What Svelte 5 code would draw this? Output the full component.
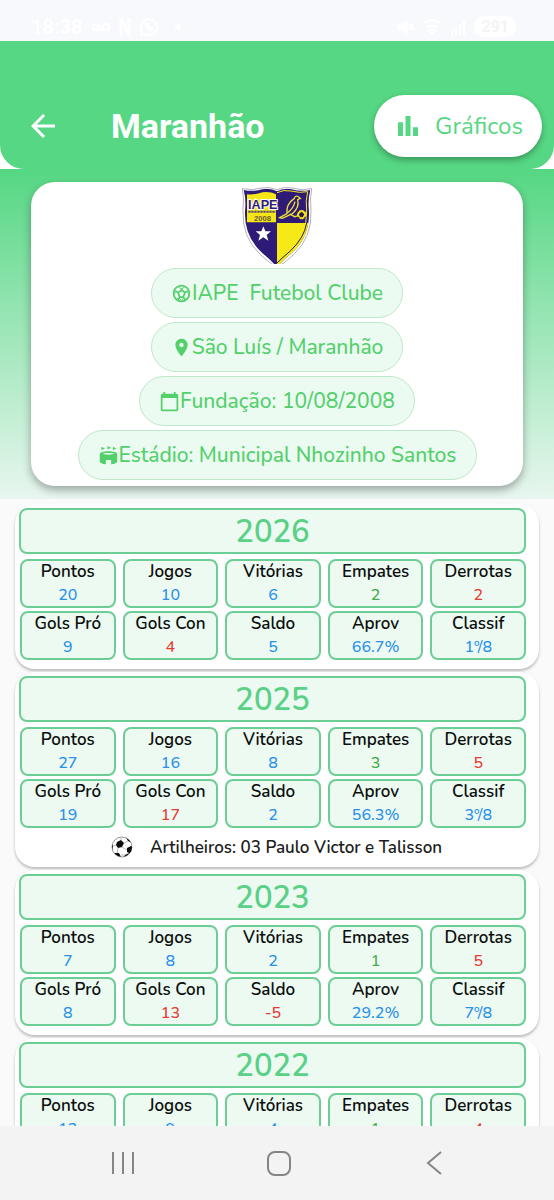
<script lang="ts">
  type Season = {
    year: number;
    values: string[];
    scorers?: string;
  };

  const labels = [
    'Pontos', 'Jogos', 'Vitórias', 'Empates', 'Derrotas',
    'Gols Pró', 'Gols Con', 'Saldo', 'Aprov', 'Classif'
  ];

  const seasons: Season[] = [
    { year: 2026, values: ['20', '10', '6', '2', '2', '9', '4', '5', '66.7%', '1º/8'] },
    {
      year: 2025,
      values: ['27', '16', '8', '3', '5', '19', '17', '2', '56.3%', '3º/8'],
      scorers: '03 Paulo Victor e Talisson'
    },
    { year: 2023, values: ['7', '8', '2', '1', '5', '8', '13', '-5', '29.2%', '7º/8'] },
    { year: 2022, values: ['13', '9', '4', '1', '4'] }
  ];

  const details = [
    { icon: 'ball', text: 'IAPE  Futebol Clube' },
    { icon: 'pin', text: 'São Luís / Maranhão' },
    { icon: 'calendar', text: 'Fundação: 10/08/2008' },
    { icon: 'stadium', text: 'Estádio: Municipal Nhozinho Santos' }
  ];

  function tone(label: string, value: string) {
    if (label === 'Empates') return 'green';
    if (label === 'Derrotas' || label === 'Gols Con' || value.startsWith('-')) return 'red';
    return 'blue';
  }
</script>

<div class="screen">
  <div class="status-bar">
    <div class="status-group">
      <span class="clock">18:38</span>
      <svg width="20" height="20" viewBox="0 0 20 20" fill="none" stroke="currentColor" stroke-width="2">
        <circle cx="5" cy="10" r="3" />
        <circle cx="15" cy="10" r="3" />
        <path d="M5 13h10" />
      </svg>
      <svg width="12" height="20" viewBox="0 0 12 20" fill="none" stroke="currentColor" stroke-width="3">
        <path d="M2 19V1l8 18V1" />
      </svg>
      <svg width="20" height="20" viewBox="0 0 20 20" fill="none" stroke="currentColor" stroke-width="2">
        <path d="M2 18l1-4a8 8 0 1 1 3 3z" />
        <path d="M7 6c-1 4 3 8 7 7l-1-2-2 0-2-2 0-2z" />
      </svg>
      <span class="dot"></span>
    </div>
    <div class="status-group">
      <svg width="18" height="18" viewBox="0 0 18 18" fill="currentColor" stroke="currentColor">
        <path d="M2 6h4l5-4v14l-5-4H2z" />
        <path d="M13 6l4 6m0-6l-4 6" stroke-width="2" />
      </svg>
      <svg width="20" height="18" viewBox="0 0 20 18" fill="none" stroke="currentColor" stroke-width="2">
        <path d="M1 6c5-5 13-5 18 0M4 10c4-3 8-3 12 0M7 13c2-2 4-2 6 0l-3 3z" />
      </svg>
      <svg width="16" height="18" viewBox="0 0 16 18" fill="currentColor">
        <path d="M1 13h2v4H1zM5 10h2v7H5zM9 6h2v11H9zM13 2h2v15h-2z" />
      </svg>
      <span class="battery">291</span>
    </div>
  </div>

  <header class="app-bar">
    <button class="back" aria-label="Voltar">
      <svg width="36" height="36" viewBox="0 0 24 24" fill="currentColor">
        <path d="M20 11H7.8l5.600-5.600L12 4l-8 8 8 8 1.400-1.400L7.800 13H20z" />
      </svg>
    </button>
    <h1>Maranhão</h1>
    <button class="charts">
      <svg width="30" height="30" viewBox="0 0 24 24" fill="currentColor">
        <path d="M4 9h4v11H4zM10 4h4v16h-4zM16 13h4v7h-4z" />
      </svg>
      Gráficos
    </button>
  </header>

  <section class="hero">
    <div class="club-card">
      <svg class="shield" width="72" height="77" viewBox="0 0 216 231" role="img" aria-label="IAPE">
        <path
          d="M4 5Q34 12 62 3Q86 -2 108 8Q130 -2 154 3Q182 12 212 5Q206 34 210 70Q214 150 158 203Q134 224 120 234H96Q82 224 58 203Q2 150 6 70Q10 34 4 5Z"
          fill="#fff" stroke="#8d8998" stroke-width="2"
        />
        <clipPath id="shield-field">
          <path d="M8 9Q36 15 64 7Q88 2 108 13Q128 2 152 7Q180 15 208 9Q200 38 204 72Q207 148 153 197Q128 218 114 234H102Q88 218 63 197Q9 148 12 72Q16 38 8 9Z" />
        </clipPath>
        <g clip-path="url(#shield-field)">
          <path d="M0 0H216V234H0Z" fill="#2e1b78" />
          <path d="M108 108H216V234H108Z" fill="#f5ea18" />
          <path d="M108 17Q128 7 150 12Q176 19 200 14Q193 40 197 72Q198 146 149 191Q124 212 108 228" fill="none" stroke="#f5ea18" stroke-width="3" />
          <path d="M197 108Q190 152 149 191Q124 212 108 228" fill="none" stroke="#24164e" stroke-width="3" />
          <path d="M18 22Q42 24 64 16Q88 13 105 22V106H18Z" fill="#f5e616" />
          <text class="crest" x="21" y="65" font-size="46" fill="#2e1b78" stroke="#fff" stroke-width="6" paint-order="stroke">IAPE</text>
          <path d="M22 74H104" stroke="#5b4c70" stroke-width="6" stroke-dasharray="7 2" />
          <text class="crest" x="39" y="101" font-size="23" fill="#6b5a3a">2008</text>
          <path d="M67 118l6 15h17l-13 11 5 17-15-10-15 10 5-17-13-11h17z" fill="#fff" />
          <path
            d="M116 92L138 80Q134 52 160 34Q162 26 170 28L178 34L170 38Q176 62 154 80L124 94Z"
            fill="none" stroke="#f0df35" stroke-width="4"
          />
          <path d="M139 78Q157 65 162 44M146 81l15 8 12-3" fill="none" stroke="#f0df35" stroke-width="4" />
          <circle cx="182" cy="83" r="14" fill="#f2e418" />
          <path d="M182 76l6 5-3 8h-7l-3-8zM173 72l-4 5M193 73l-5-3M170 90l6 4M189 94l5-5" fill="#2b1a50" stroke="#2b1a50" stroke-width="3" />
        </g>
      </svg>

      {#each details as detail}
        <div class="pill">
          <svg width="21" height="21" viewBox="0 0 24 24" fill="currentColor">
            {#if detail.icon === 'ball'}
              <g fill="none" stroke="currentColor" stroke-width="2">
                <circle cx="12" cy="12" r="9" />
                <path d="M12 8l4 3-2 5h-4l-2-5zM12 8V6M16 11l3-2M14 16l2 3M10 16l-2 3M8 11L5 9" />
                <path d="M8 4l4 3 4-3M20 7l-1 4 2 3M18 18l-4 0-2 2M4 7l1 4-2 3M6 18h4l2 2" stroke-width="1" />
              </g>
            {:else if detail.icon === 'pin'}
              <path d="M12 2C8.13 2 5 5.13 5 9c0 5.25 7 13 7 13s7-7.75 7-13c0-3.87-3.13-7-7-7zm0 9.5a2.5 2.5 0 1 1 0-5 2.5 2.5 0 0 1 0 5z" />
            {:else if detail.icon === 'calendar'}
              <path d="M20 3h-1V1h-2v2H7V1H5v2H4c-1.1 0-2 .9-2 2v16c0 1.1.9 2 2 2h16c1.1 0 2-.9 2-2V5c0-1.1-.9-2-2-2zm0 18H4V8h16z" />
            {:else}
              <path d="M4 2l4 2-4 2zM17 2v4l4-2zM11 1v4l4-2zM5 10c1.4.5 3.8 1 7 1s5.600-.5 7-1c0-.2-2.800-1-7-1s-7 .8-7 1M15 17H9v4.900C4.900 21.500 2 20.300 2 19v-9c0-1.700 4.500-3 10-3s10 1.300 10 3v9c0 1.300-2.900 2.500-7 2.900z" />
            {/if}
          </svg>
          <span>{detail.text}</span>
        </div>
      {/each}
    </div>
  </section>

  <main class="seasons">
    {#each seasons as season (season.year)}
      <article class="season">
        <h2>{season.year}</h2>
        <dl class="stats">
          {#each season.values as value, i}
            <div class="stat">
              <dt>{labels[i]}</dt>
              <dd class={tone(labels[i], value)}>{value}</dd>
            </div>
          {/each}
        </dl>
        {#if season.scorers}
          <p class="scorers">
            <svg width="22" height="22" viewBox="0 0 22 22">
              <clipPath id="ball-edge"><circle cx="11" cy="11" r="10" /></clipPath>
              <circle cx="11" cy="11" r="10" fill="#fff" stroke="#999" />
              <g clip-path="url(#ball-edge)">
                <path d="M6 6l4-2 3 3-2 4-4 1-2-3zM14 0l6 3 1 4-4-2zM0 6l2 4-1 5H0zM16 12l4-2 3 2-3 6-4-2zM3 17l5 0 2 4-4 1zM14 19l4-2-2 5h-4z" fill="#0c0c0c" />
                <path d="M13 7l4-2M11 11l5 3M7 12l-1 5M2 10l3-1M10 19l4 0M10 4V1" stroke="#bbb" fill="none" />
              </g>
            </svg>
            <span>Artilheiros: {season.scorers}</span>
          </p>
        {/if}
      </article>
    {/each}
  </main>

  <nav class="system-nav">
    <button aria-label="Recentes">
      <svg width="26" height="26" viewBox="0 0 26 26">
        <path d="M3 2v22M13 2v22M23 2v22" />
      </svg>
    </button>
    <button aria-label="Início">
      <svg width="26" height="26" viewBox="0 0 26 26">
        <rect x="2" y="2" width="22" height="23" rx="7" />
      </svg>
    </button>
    <button aria-label="Voltar ao anterior">
      <svg width="26" height="26" viewBox="0 0 26 26">
        <path d="M19 2L6 13l13 11" />
      </svg>
    </button>
  </nav>
</div>

<style>
  :global(body) {
    margin: 0;
    background: #fff;
  }

  .screen {
    height: 100vh;
    display: flex;
    flex-direction: column;
    overflow: hidden;
    font-family: Nunito, Lato, 'Noto Sans', sans-serif;
    font-weight: 600;
  }

  button {
    border: none;
    background: none;
    padding: 0;
    font: inherit;
    cursor: pointer;
  }

  svg {
    flex: none;
    display: block;
  }

  .status-bar {
    flex: none;
    height: 41px;
    box-sizing: border-box;
    padding: 12px 38px 0 31px;
    display: flex;
    justify-content: space-between;
    background: #f8f9fc;
    color: #fff;
    font-family: Roboto, sans-serif;
  }

  .status-group {
    display: flex;
    align-items: center;
    gap: 8px;
  }

  .clock {
    font-size: 20px;
    font-weight: 700;
  }

  .dot {
    width: 6px;
    height: 6px;
    margin-left: 8px;
    border-radius: 50%;
    background: #fff;
  }

  .battery {
    padding: 0 7px;
    border-radius: 10px;
    background: #fff;
    color: #f3f4f6;
    font-size: 16px;
    line-height: 21px;
    font-weight: 700;
  }

  .app-bar {
    flex: none;
    height: 128px;
    box-sizing: border-box;
    padding: 41px 12px 0 25px;
    display: flex;
    align-items: center;
    border-radius: 0 0 24px 24px;
    background: #55d783;
    color: #fff;
  }

  .back {
    color: #fff;
  }

  h1 {
    flex: 1;
    margin: 0 0 0 50px;
    font-family: Roboto, sans-serif;
    font-size: 34px;
    font-weight: 700;
    line-height: 40px;
  }

  .charts {
    display: flex;
    align-items: center;
    gap: 12px;
    height: 62px;
    padding: 0 19px;
    border-radius: 31px;
    background: #fff;
    color: #55d783;
    font-size: 24px;
    font-weight: 400;
    box-shadow: 0 3px 6px rgba(0, 0, 0, 0.3);
  }

  .hero {
    flex: none;
    padding: 13px 31px;
    background: linear-gradient(#55d783, #e8f6ef);
  }

  .club-card {
    display: flex;
    flex-direction: column;
    align-items: center;
    gap: 4px;
    padding: 5px 16px 6px;
    border-radius: 24px;
    background: #fff;
    box-shadow: 0 4px 8px rgba(0, 0, 0, 0.32);
  }

  .crest {
    font-family: 'Liberation Sans Narrow', 'Liberation Sans', sans-serif;
    font-weight: 700;
  }

  text.crest:first-of-type {
    font-size: 38px;
  }

  .pill {
    height: 50px;
    box-sizing: border-box;
    padding: 0 19px;
    display: flex;
    align-items: center;
    border: 1px solid #bfe8ca;
    border-radius: 25px;
    background: #ecfbf1;
    color: #53d06c;
    font-size: 21px;
    font-weight: 500;
    white-space: pre;
  }

  .seasons {
    flex: 1;
    min-height: 0;
    overflow: hidden;
    padding: 5px 15px 0;
    background: #fafafa;
  }

  .season {
    margin-bottom: 3px;
    padding: 4px 13px 9px 4px;
    border-radius: 20px;
    background: #fff;
    box-shadow: 0 2px 3px rgba(0, 0, 0, 0.26);
  }

  h2 {
    margin: 0;
    padding-top: 2px;
    border: 2px solid #6dce95;
    border-radius: 8px;
    background: #ecfaf2;
    color: #5bd087;
    font-size: 31px;
    font-weight: 600;
    line-height: 40px;
    text-align: center;
  }

  .stats {
    display: grid;
    grid-template-columns: repeat(5, 1fr);
    gap: 3px 7px;
    margin: 5px 0 0 1px;
  }

  .stat {
    height: 49px;
    box-sizing: border-box;
    border: 2px solid #6dce95;
    border-radius: 8px;
    background: #ecfaf2;
    text-align: center;
  }

  dt {
    color: #0c0f0d;
    font-size: 17px;
    line-height: 22px;
  }

  dd {
    margin: 0;
    font-size: 16px;
    font-weight: 500;
    line-height: 24px;
  }

  .blue {
    color: #2b90e8;
  }

  .green {
    color: #46ac4b;
  }

  .red {
    color: #e53c35;
  }

  .scorers {
    display: flex;
    align-items: center;
    justify-content: center;
    gap: 17px;
    height: 30px;
    margin: 4px 0 -4px 8px;
    color: #1c1c1c;
    font-size: 17px;
  }

  .system-nav {
    flex: none;
    height: 74px;
    padding: 0 41px 0 45px;
    display: flex;
    background: #f3f3f3;
  }

  .system-nav button {
    flex: 1;
    display: flex;
    align-items: center;
    justify-content: center;
  }

  .system-nav svg {
    fill: none;
    stroke: #858585;
    stroke-width: 2;
  }
</style>
